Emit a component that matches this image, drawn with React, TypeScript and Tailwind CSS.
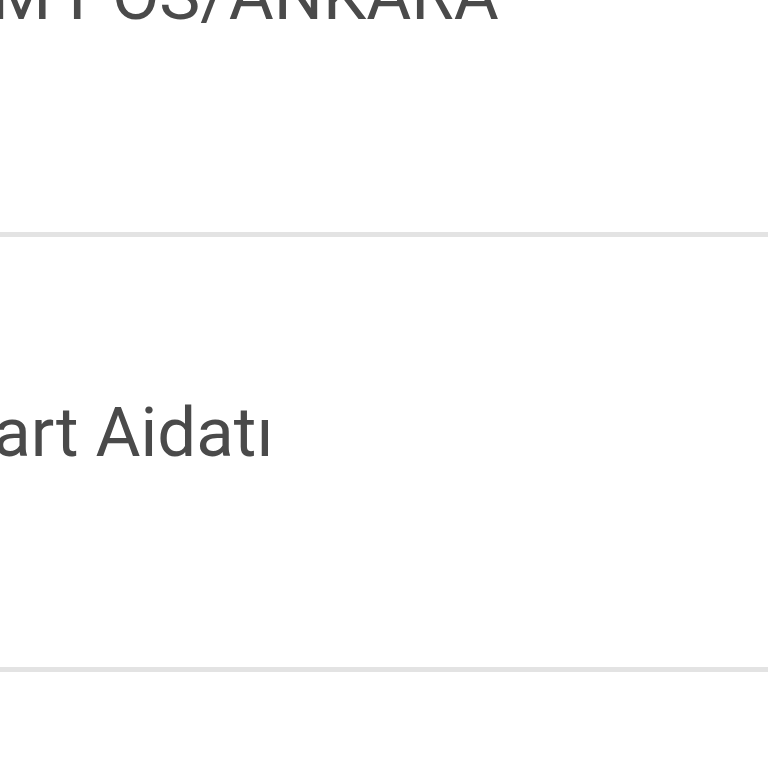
const rows = [
  { label: 'M POS/ANKARA' },
  { label: 'Kart Aidatı' },
];

const Divider = () => <div className="h-[5px] w-full shrink-0 bg-[#e3e3e3]" />;

export default function App() {
  return (
    <div className="flex flex-col w-[768px] h-[768px] overflow-hidden bg-white font-['Roboto',sans-serif] text-[#4a4a4a]">
      <div className="flex flex-col h-[232px] shrink-0">
        <div className="-mt-[39px] -ml-[9px] whitespace-nowrap text-[69px] leading-none">
          {rows[0].label}
        </div>
      </div>
      <Divider />
      <div className="flex flex-col h-[430px] shrink-0 pt-[161px]">
        <div className="-ml-[50px] whitespace-nowrap text-[69px] leading-none">
          {rows[1].label}
        </div>
      </div>
      <Divider />
      <div className="flex-1" />
    </div>
  );
}
